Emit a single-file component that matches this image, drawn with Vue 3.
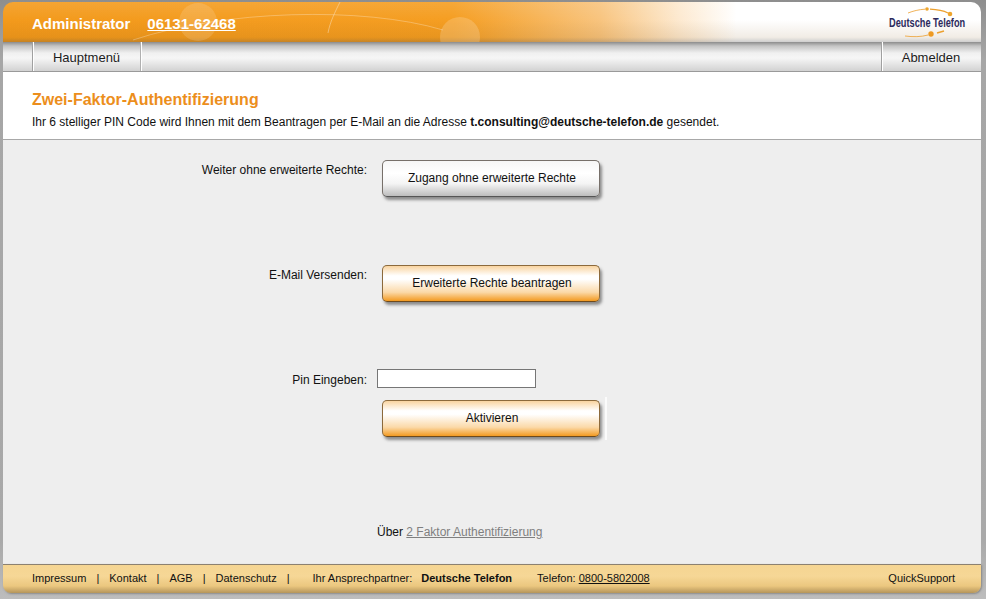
<template>
  <div class="page">
    <div class="shell">
      <header class="top">
        <svg class="swoosh" width="978" height="40" viewBox="0 0 978 40">
          <circle cx="195" cy="20" r="19" fill="#fff" opacity="0.14" />
          <circle cx="457" cy="35" r="20" fill="#fff" opacity="0.18" />
          <path d="M130 38C220 8 360 4 440 28" fill="none" stroke="#fff" stroke-width="1" opacity="0.28" />
          <path d="M325 31C327 20 332 10 337 0" fill="none" stroke="#fff" stroke-width="1" opacity="0.35" />
        </svg>
        <div class="who">
          <span class="admin">Administrator</span>
          <a class="phone">06131-62468</a>
        </div>
        <svg class="logo" width="84" height="36" viewBox="0 0 84 36">
          <path d="M23 8C28 6 34 4.500 40 4.200" fill="none" stroke="#eca02f" stroke-width="0.8" />
          <circle cx="42" cy="4" r="1.800" fill="#eea52e" />
          <path d="M45 4.200C52 4.500 58 5.500 63 8" fill="none" stroke="#eca02f" stroke-width="1.200" />
          <circle cx="65" cy="9" r="2.300" fill="#eea52e" />
          <text transform="translate(4 22) scale(0.71 1)" class="logo-text">Deutsche Telefon</text>
          <path d="M20 31C28 32 36 32 43 30" fill="none" stroke="#eca02f" stroke-width="0.8" />
          <circle cx="46" cy="29" r="2.700" fill="#ee9a22" />
          <path d="M52 28L59 26" fill="none" stroke="#eca02f" stroke-width="1.500" />
        </svg>
      </header>

      <nav class="menu">
        <a class="menu-item first">Hauptmenü</a>
        <a class="menu-item last">Abmelden</a>
      </nav>

      <section class="intro">
        <h1>Zwei-Faktor-Authentifizierung</h1>
        <p>Ihr 6 stelliger PIN Code wird Ihnen mit dem Beantragen per E-Mail an die Adresse <b>t.consulting@deutsche-telefon.de</b> gesendet.</p>
      </section>

      <main class="content">
        <div class="row row-access">
          <label>Weiter ohne erweiterte Rechte:</label>
          <button class="btn plain">Zugang ohne erweiterte Rechte</button>
        </div>
        <div class="row row-mail">
          <label>E-Mail Versenden:</label>
          <button class="btn orange">Erweiterte Rechte beantragen</button>
        </div>
        <div class="row row-pin">
          <label>Pin Eingeben:</label>
          <input type="text" class="pin" />
        </div>
        <div class="row row-activate">
          <span class="spacer"></span>
          <div class="activate-wrap">
            <button class="btn orange">Aktivieren</button>
          </div>
        </div>
        <div class="row row-about">
          <span class="spacer"></span>
          <span class="about">Über <a>2 Faktor Authentifizierung</a></span>
        </div>
      </main>

      <footer class="bottom">
        <a>Impressum</a><i>|</i>
        <a>Kontakt</a><i>|</i>
        <a>AGB</a><i>|</i>
        <a>Datenschutz</a><i>|</i>
        <span class="contact">Ihr Ansprechpartner:</span>
        <b>Deutsche Telefon</b>
        <span class="tel">Telefon: <u>0800-5802008</u></span>
        <a class="quick">QuickSupport</a>
      </footer>
    </div>
  </div>
</template>

<script setup>
</script>

<style>
html, body { margin: 0; background: #a9a9a9; }
</style>

<style scoped>
.page {
  width: 986px;
  height: 599px;
  padding: 2px 5px 0 3px;
  box-sizing: border-box;
  background: linear-gradient(#8e8e8e, #a6a6a6 60px, #a9a9a9 540px, #bdbdbd);
  font-family: "Liberation Sans", Arial, sans-serif;
  overflow: hidden;
}

.shell {
  width: 978px;
  height: 591px;
  display: flex;
  flex-direction: column;
}

.top {
  position: relative;
  height: 40px;
  flex-shrink: 0;
  display: flex;
  align-items: center;
  justify-content: space-between;
  padding: 0 12px 0 29px;
  box-sizing: border-box;
  border-radius: 10px 10px 0 0;
  background:
    linear-gradient(rgba(255,255,255,0.1), rgba(255,255,255,0) 45%, rgba(120,70,0,0.1) 88%, rgba(60,60,60,0.25)),
    linear-gradient(90deg, #f39a1c 0, #f59e22 46%, #f8c47e 61%, #fde9cf 69%, #fff 75%, #fff 100%);
  overflow: hidden;
}

.swoosh { position: absolute; left: 0; top: 0; }

.who {
  position: relative;
  display: flex;
  align-items: center;
  gap: 17px;
  margin-top: 2px;
  color: #fff;
  font-size: 15px;
  font-weight: 700;
}
.phone { text-decoration: underline; }

.logo { position: relative; margin-top: 2px; }
.logo-text {
  font-family: "Liberation Sans", Arial, sans-serif;
  font-weight: 700;
  font-size: 13px;
  fill: #2c2a5c;
}

.menu {
  height: 30px;
  flex-shrink: 0;
  display: flex;
  justify-content: space-between;
  padding-left: 30px;
  box-sizing: border-box;
  border-bottom: 1px solid #9a9a9a;
  background: linear-gradient(#8c8c8c 0, #c4c4c4 4px, #f0f0f0 11px, #f6f6f6 16px, #d2d2d2 100%);
}
.menu-item {
  display: flex;
  align-items: center;
  justify-content: center;
  font-size: 13px;
  color: #1c1c1c;
  padding: 1px 2px 0 0;
  box-sizing: border-box;
}
.first {
  width: 109px;
  border-left: 1px solid #fff;
  border-right: 1px solid #fff;
  box-shadow: -1px 0 0 #a0a0a0, inset -1px 0 0 #b0b0b0;
}
.last {
  width: 99px;
  border-left: 1px solid #fff;
  box-shadow: -1px 0 0 #a0a0a0;
}

.intro {
  height: 68px;
  flex-shrink: 0;
  box-sizing: border-box;
  padding: 18px 0 0 29px;
  background: #fff;
  border-bottom: 1px solid #a8a8a8;
}
.intro h1 {
  margin: 0;
  color: #ec8e1c;
  font-size: 16px;
  line-height: 20px;
  font-weight: 700;
}
.intro p {
  margin: 5px 0 0;
  font-size: 12px;
  line-height: 15px;
  color: #111;
}

.content {
  flex: 1;
  min-height: 0;
  display: flex;
  flex-direction: column;
  background: #eeeeee;
  padding-top: 20px;
  box-sizing: border-box;
}

.row {
  display: flex;
  align-items: flex-start;
  font-size: 12px;
  color: #111;
}
.row label, .spacer {
  width: 364px;
  flex-shrink: 0;
  text-align: right;
  line-height: 15px;
  padding-top: 3px;
}
.row-access .btn, .row-mail .btn { margin-left: 15px; }
.row-mail { margin-top: 68px; }
.row-pin { margin-top: 67px; }
.row-pin label { padding-top: 4px; }
.row-activate { margin-top: 12px; }
.row-about { margin-top: 85px; }

.btn {
  width: 218px;
  height: 37px;
  padding: 0 0 2px 2px;
  border: 1px solid #77706a;
  border-radius: 5px;
  box-shadow: 2px 3px 3px rgba(60,60,60,0.55);
  font-family: inherit;
  font-size: 12px;
  color: #111;
  cursor: pointer;
}
.plain {
  background: linear-gradient(#f6f6f6, #fff 35%, #f4f4f4 65%, #bdbdbd);
  border-bottom-color: #555;
}
.orange {
  background: linear-gradient(#f9d4a0, #fff 28%, #fff 38%, #fbd9a8 75%, #f39a20);
  border-color: #8c6a3c;
  border-bottom-color: #6e4a1c;
}

.pin {
  width: 159px;
  height: 19px;
  margin-left: 10px;
  box-sizing: border-box;
  border: 1px solid #767676;
  background: #fff;
  padding: 0 2px;
}

.activate-wrap {
  margin-left: 15px;
  padding: 3px 5px 3px 0;
  margin-top: -3px;
  border-right: 2px solid #fbfbfb;
}

.about { margin-left: 10px; line-height: 15px; }
.about a { color: #7f7f7f; text-decoration: underline; }

.bottom {
  height: 29px;
  flex-shrink: 0;
  display: flex;
  align-items: center;
  padding: 0 26px 3px 29px;
  box-sizing: border-box;
  border-top: 1px solid #8c8170;
  border-radius: 0 0 8px 8px;
  background: linear-gradient(#f5d592, #f6d796 40%, #ebc77f 75%, #b5955a);
  box-shadow: 1px 1px 2px rgba(90,90,90,0.5);
  font-size: 11px;
  color: #111;
}
.bottom i { font-style: normal; margin: 0 10px; }
.contact { margin-left: 13px; }
.bottom b { margin-left: 9px; }
.tel { margin-left: 25px; }
.quick { margin-left: auto; }
</style>
